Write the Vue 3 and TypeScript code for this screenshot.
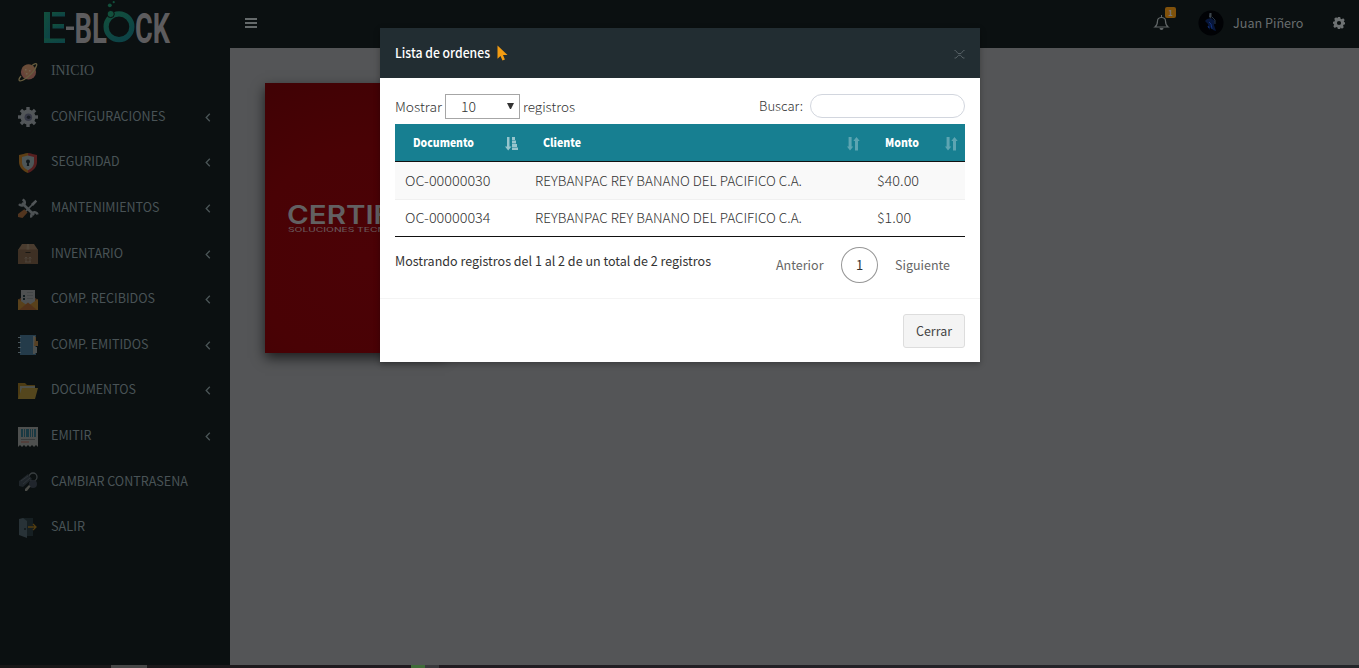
<script setup lang="ts">
interface MenuItem {
  label: string
  icon: string
  arrow: boolean
  width: number
}
interface Order {
  doc: string
  client: string
  amount: string
}

const menu: MenuItem[] = [
  { label: 'INICIO', icon: 'planet', arrow: false, width: 43 },
  { label: 'CONFIGURACIONES', icon: 'gear', arrow: true, width: 114.5 },
  { label: 'SEGURIDAD', icon: 'shield', arrow: true, width: 68.5 },
  { label: 'MANTENIMIENTOS', icon: 'tools', arrow: true, width: 108.5 },
  { label: 'INVENTARIO', icon: 'box', arrow: true, width: 72 },
  { label: 'COMP. RECIBIDOS', icon: 'mail', arrow: true, width: 104 },
  { label: 'COMP. EMITIDOS', icon: 'book', arrow: true, width: 97.5 },
  { label: 'DOCUMENTOS', icon: 'folder', arrow: true, width: 85 },
  { label: 'EMITIR', icon: 'ticket', arrow: true, width: 40.5 },
  { label: 'CAMBIAR CONTRASENA', icon: 'keys', arrow: false, width: 137 },
  { label: 'SALIR', icon: 'door', arrow: false, width: 34 },
]

const orders: Order[] = [
  { doc: 'OC-00000030', client: 'REYBANPAC REY BANANO DEL PACIFICO C.A.', amount: '$40.00' },
  { doc: 'OC-00000034', client: 'REYBANPAC REY BANANO DEL PACIFICO C.A.', amount: '$1.00' },
]
</script>

<template>
  <div class="page">
    <aside class="sidebar">
      <svg class="logo" width="230" height="48" viewBox="0 0 230 48">
        <defs>
          <linearGradient id="teal" x1="0" y1="0" x2="0.6" y2="1">
            <stop offset="0" stop-color="#12503c" />
            <stop offset="1" stop-color="#0d4346" />
          </linearGradient>
        </defs>
        <g fill="url(#teal)">
          <rect x="44" y="12" width="6" height="31" />
          <rect x="52" y="12" width="13" height="4.500" />
          <rect x="52.500" y="24" width="11.500" height="4.500" />
          <rect x="44" y="38.500" width="21" height="4.500" />
        </g>
        <g class="logo-text">
          <rect x="66" y="26.500" width="8" height="3.500" />
          <text x="74.500" y="42.500" textLength="32.500" lengthAdjust="spacingAndGlyphs">BL</text>
          <text x="135" y="42.500" textLength="35" lengthAdjust="spacingAndGlyphs">CK</text>
        </g>
        <circle cx="119" cy="26.800" r="15.900" fill="#0b1011" />
        <circle cx="119" cy="26.800" r="12.900" fill="none" stroke="url(#teal)" stroke-width="5.200" />
        <circle cx="110.700" cy="14" r="3.600" fill="#12503c" stroke="#0b1011" stroke-width="1" />
        <circle cx="109.800" cy="5.300" r="1.900" fill="#12503c" />
        <circle cx="113.700" cy="2.200" r="1.100" fill="#12503c" />
      </svg>

      <nav class="menu">
        <div v-for="item in menu" :key="item.label" class="menu-item">
          <svg class="icon" width="20" height="20" viewBox="0 0 20 20">
            <g v-if="item.icon === 'planet'">
              <circle cx="10.500" cy="10" r="7.600" fill="#e88a75" />
              <path d="M4 6a7.600 7.600 0 0 1 13 0L8 15z" fill="#f0a86c" opacity=".7" />
              <path d="M7 7h1.500v1.500H7zM11 8h1.500v1.500H11zM8 11h1.500v1.500H8z" fill="#ffd2a8" />
              <path d="M14 3.600C17 1.200 19.400.600 18.600 3.500 17.500 7 14 11.500 10 14.800 6 18 1.200 20.500 1 17.800.900 16.800 1.700 15.500 3 14" fill="none" stroke="#e6c77e" stroke-width="1.300" />
            </g>
            <g v-else-if="item.icon === 'gear'">
              <g fill="#b5b8bc">
                <circle cx="10" cy="10" r="7.500" />
                <rect v-for="n in 8" :key="n" x="8.300" y="0" width="3.400" height="5" :transform="`rotate(${n * 45} 10 10)`" />
              </g>
              <circle cx="10.300" cy="10.300" r="3.800" fill="#70708e" />
              <circle cx="10.600" cy="10.200" r="1.800" fill="#272b37" />
            </g>
            <g v-else-if="item.icon === 'shield'">
              <path d="M10 0C7 .200 4 1.500 1 2v7c0 5 4 9 9 11z" fill="#d1811b" />
              <path d="M10 0c3 .200 6 1.500 9 2v7c0 5-4 9-9 11z" fill="#bd3434" />
              <path d="M10 2.500 16 4v5c0 4-2.500 6.500-6 8.300C6.500 15.500 4 13 4 9V4z" fill="#a9b6b9" />
              <circle cx="10" cy="8.500" r="2" fill="#172428" />
              <path d="M9.200 9h1.600l.400 4H8.800z" fill="#172428" />
            </g>
            <g v-else-if="item.icon === 'tools'">
              <path d="m4 4 12 12" stroke="#a9adb2" stroke-width="2.600" />
              <path d="M1 5.200c2 2.200 5 1.500 5.600-.500C7.100 3 6 1.200 4.600.500M13.500 18.500c-1-2 .500-5 2.500-5.200 1.600-.200 3.200 1 3.500 2.200" fill="none" stroke="#a9adb2" stroke-width="2.500" />
              <path d="m7.500 12.500 8-8" stroke="#a9adb2" stroke-width="1.700" />
              <path d="m13 5 4.500-4.200 1.700 1.700L15 7z" fill="#b5b8bc" />
              <path d="m6.300 10.300 3.200 3.200L4.500 19 0 18v-3z" fill="#b56833" />
            </g>
            <g v-else-if="item.icon === 'box'">
              <path d="M4 0h12l4 6H0z" fill="#a17959" />
              <path d="M0 5.500h20V20H0z" fill="#855d3f" />
              <path d="M9 0h2l.500 5.500h-3z" fill="#b19172" />
              <path d="M7.500 8h5v1h-5z" fill="#2d2118" />
              <path d="M8 18v-4.500m-1.300 1L8 13l1.300 1.500M12 18v-4.500m-1.300 1L12 13l1.300 1.500M7 18h6" fill="none" stroke="#ae9580" stroke-width=".800" />
            </g>
            <g v-else-if="item.icon === 'mail'">
              <path d="M0 10 4 7h12l4 3v10H0z" fill="#a45d26" />
              <path d="M3 0h14v15H3z" fill="#aaa" />
              <path d="M5 5h2v2H5zm0 3h2v2H5z" fill="#182e34" />
              <path d="M9 2h6v.700H9zm0 3h6v.700H9zm0 3h6v.700H9z" fill="#8b8b8b" />
              <path d="m0 9 10 7 10-7v11H0z" fill="#c48529" />
              <path d="m1 20 9-7.500 9 7.500z" fill="#b36027" />
            </g>
            <g v-else-if="item.icon === 'book'">
              <path d="M2 0h16v20H2z" fill="#48789a" />
              <path d="M0 2h3v1H0zm0 5h3v1H0zm0 5h3v1H0zm0 5h3v1H0z" fill="#a1b7c3" />
              <path d="M15 1h2v18h-2z" fill="#a6a7a0" />
              <path d="M17 2h1v4h2v5h-4z" fill="#c0833d" />
              <path d="M17 12h2v6h-3z" fill="#a4a9aa" />
            </g>
            <g v-else-if="item.icon === 'folder'">
              <path d="M0 2h7l2 2h8v14H0z" fill="#a77616" />
              <path d="M2 5h15v8H2z" fill="#aaa998" />
              <path d="M4 7h16l-3 11H0z" fill="#b9922f" />
            </g>
            <g v-else-if="item.icon === 'ticket'">
              <path d="M0 0h20v20l-2-2-2 2-2-2-2 2-2-2-2 2-2-2-2 2-2-2-2 2z" fill="#aaa9a5" />
              <path d="M3 2h2v8H3zm3 0h1v8H6zm2 0h3v8H8zm4 0h1v8h-1zm2 0h1v8h-1zm2 0h2v8h-2z" fill="#2e7289" />
              <path d="M3 12h14v1H3z" fill="#777" />
              <path d="M3 14.500h8v1H3z" fill="#c05b48" />
            </g>
            <g v-else-if="item.icon === 'keys'">
              <circle cx="15" cy="5" r="4" fill="none" stroke="#777d80" stroke-width="1.300" />
              <path d="m1 9 9-7 4 5-9 8-4-1z" fill="#3c434d" />
              <path d="m3 9 7-5M5 12l7-6" stroke="#5e6670" stroke-width="1" />
              <circle cx="15" cy="12" r="4" fill="#3d4251" />
              <path d="m11 13 1.500 1.500L9 19H7v-2z" fill="#a19c91" />
            </g>
            <g v-else>
              <path d="M5 0h10v18H5z" fill="#26353b" />
              <path d="M1 1 5 0l4 3v17l-8-3z" fill="#51616c" />
              <circle cx="7" cy="11" r="1" fill="#192329" />
              <path d="M10 9h8m-3-3 3 3-3 3" fill="none" stroke="#b47c13" stroke-width="1.300" />
            </g>
          </svg>
          <svg class="menu-label" width="150" height="20" :class="{ serif: item.icon === 'planet' }">
            <text x="0" y="14.500" :textLength="item.width" lengthAdjust="spacingAndGlyphs">{{ item.label }}</text>
          </svg>
          <svg v-if="item.arrow" class="arrow" width="6" height="9" viewBox="0 0 6 9">
            <path d="M4.800.700 1.200 4.500l3.600 3.800" fill="none" stroke="#4b5557" stroke-width="1.300" />
          </svg>
        </div>
      </nav>
    </aside>

    <header class="topbar">
      <div class="burger"><i></i><i></i><i></i></div>
      <div class="bell">
        <svg width="15" height="16" viewBox="0 0 15 16">
          <path d="M1 12c2-1.500 2.500-3.500 2.500-6C3.500 4 5 2.700 7 2.500h1c2 .200 3.500 1.500 3.500 3.500 0 2.500.500 4.500 2.500 6z" fill="none" stroke="#626768" stroke-width="1.200" />
          <path d="M7 0h1v2.500H7zM5.500 13h4a2 2 0 0 1-4 0z" fill="#626768" />
        </svg>
        <span class="count">1</span>
      </div>
      <svg class="avatar" width="26" height="26" viewBox="0 0 26 26">
        <circle cx="13" cy="13" r="12.500" fill="#010205" />
        <path d="m9 9 4-1 4 3-1 4 2 6-3-1-2-3-2 3-1-6-3-3z" fill="#07163a" />
        <path d="m11 12 2 2 1 5M10 16l1 2" stroke="#12307c" fill="none" />
        <path d="M11.500 3h2v4l-1 1-1.500-1z" fill="#3c454d" />
        <path d="m14 7 3 3v4" stroke="#26364c" fill="none" />
      </svg>
      <svg class="user" width="74" height="20"><text x="0" y="14.500" textLength="70.500" lengthAdjust="spacingAndGlyphs">Juan Piñero</text></svg>
      <svg class="cog" width="12" height="12" viewBox="0 0 20 20" fill="#6d7172">
        <path fill-rule="evenodd" d="M8 0h4l.600 3 1.700.700L17 2l2.500 3-1.500 2.500.500 1L20 9v3l-2.500 1-.700 1.500L18 17l-3 2.500-2.500-1.800L12 20H8l-.500-2.500-2-.700L3 18.500.500 15.500 2 13l-.500-1L0 11V8l2.500-.500.700-2L2 3l3-2.500L7.500 2zM10 6.500a3.500 3.500 0 1 0 0 7 3.500 3.500 0 0 0 0-7z" />
      </svg>
    </header>

    <main class="content">
      <div class="card">
        <svg width="150" height="40" viewBox="0 0 150 40" class="brand">
          <text class="brand-name" x="-1" y="27" textLength="104" lengthAdjust="spacingAndGlyphs">CERTIF</text>
          <text class="brand-sub" x="0" y="34.500" textLength="105" lengthAdjust="spacingAndGlyphs">SOLUCIONES TECNO</text>
        </svg>
      </div>
    </main>

    <div class="taskbar"><i class="active"></i><i class="green"></i><i class="grey"></i></div>

    <section class="modal">
      <div class="modal-head">
        <svg width="98" height="20"><text class="title" x="0" y="15" textLength="95" lengthAdjust="spacingAndGlyphs">Lista de ordenes</text></svg>
        <svg class="cursor" width="11" height="16" viewBox="0 0 11 16"><path d="M.500.500v13.300l3-2.800 2 4.400 2.400-1L6 10h4.500z" fill="#f39c12" /></svg>
        <svg class="close" width="11" height="9" viewBox="0 0 11 9">
          <path d="M.500.500h1L4 3.500h3L9.500.500h1M.500 8h1.500L4.500 5.300h2L9 8h1.500" fill="none" stroke="#566065" />
        </svg>
      </div>

      <div class="modal-body">
        <div class="controls">
          <svg width="48" height="20" class="t"><text x="0" y="15" textLength="47" lengthAdjust="spacingAndGlyphs">Mostrar</text></svg>
          <div class="select">
            <svg width="18" height="20" class="t"><text x="0" y="15" textLength="15" lengthAdjust="spacingAndGlyphs">10</text></svg>
            <i class="caret"></i>
          </div>
          <svg width="53" height="20" class="t"><text x="0" y="15" textLength="52" lengthAdjust="spacingAndGlyphs">registros</text></svg>
          <svg width="45" height="20" class="t search-label"><text x="0" y="14" textLength="44" lengthAdjust="spacingAndGlyphs">Buscar:</text></svg>
          <input class="search" type="text" />
        </div>

        <div class="row head">
          <div><svg width="64" height="20"><text x="0" y="14" textLength="61" lengthAdjust="spacingAndGlyphs">Documento</text></svg>
            <svg class="sort on" width="13" height="14" viewBox="0 0 13 14"><path d="M2 0h2.500v9.500h2L3.200 13.500 0 9.500h2zM7 0h3v3H7zM7 3.500h4v3H7zM7 7h5v3H7zM7 10.500h6V13H7z" /></svg>
          </div>
          <div><svg width="42" height="20"><text x="0" y="14" textLength="38" lengthAdjust="spacingAndGlyphs">Cliente</text></svg>
            <svg class="sort" width="13" height="14" viewBox="0 0 13 14"><path d="M1.600 0h3v9.500h1.700L3 13.500 0 9.500h1.600zM9.500 0l3.200 4H11v9.500H8V4H6.300z" /></svg>
          </div>
          <div><svg width="38" height="20"><text x="0" y="14" textLength="34" lengthAdjust="spacingAndGlyphs">Monto</text></svg>
            <svg class="sort" width="13" height="14" viewBox="0 0 13 14"><path d="M1.600 0h3v9.500h1.700L3 13.500 0 9.500h1.600zM9.500 0l3.200 4H11v9.500H8V4H6.300z" /></svg>
          </div>
        </div>
        <div v-for="(o, i) in orders" :key="o.doc" class="row data" :class="{ odd: i === 0 }">
          <div><svg width="90" height="20" class="t"><text x="0" y="15" textLength="85.500" lengthAdjust="spacingAndGlyphs">{{ o.doc }}</text></svg></div>
          <div><svg width="280" height="20" class="t"><text x="0" y="15" textLength="267" lengthAdjust="spacingAndGlyphs">{{ o.client }}</text></svg></div>
          <div><svg width="50" height="20" class="t"><text x="0" y="15" :textLength="i === 0 ? 42 : 34" lengthAdjust="spacingAndGlyphs">{{ o.amount }}</text></svg></div>
        </div>

        <div class="foot">
          <svg class="info" width="320" height="20"><text x="0" y="14.500" textLength="316" lengthAdjust="spacingAndGlyphs">Mostrando registros del 1 al 2 de un total de 2 registros</text></svg>
          <svg class="prev" width="49" height="20"><text x="0" y="14.500" textLength="47.500" lengthAdjust="spacingAndGlyphs">Anterior</text></svg>
          <span class="current">1</span>
          <svg class="next" width="56" height="20"><text x="0" y="14.500" textLength="55" lengthAdjust="spacingAndGlyphs">Siguiente</text></svg>
        </div>
      </div>

      <div class="modal-foot">
        <button type="button"><svg width="37" height="20"><text x="0" y="14.500" textLength="36" lengthAdjust="spacingAndGlyphs">Cerrar</text></svg></button>
      </div>
    </section>
  </div>
</template>

<style>
body { margin: 0; overflow: hidden; }
</style>

<style scoped>
* { box-sizing: border-box; }
svg { display: block; flex: none; overflow: visible; }
.page {
  position: relative;
  display: grid;
  grid-template-columns: 230px 1fr;
  grid-template-rows: 48px 617px 3px;
  width: 1359px;
  height: 668px;
  overflow: hidden;
  background: #545557;
  font-family: "Noto Sans CJK SC", "Noto Sans", sans-serif;
  font-size: 13px;
}
.sidebar { grid-row: 1 / 3; background: #0b1011; }
.logo-text { fill: #5d5c5e; font: 700 43px Roboto, sans-serif; }
.menu-item {
  display: flex;
  align-items: center;
  height: 45.600px;
  padding: 0 19px 0 18px;
}
.menu { margin-top: 1px; }
.icon { opacity: .42; }
.menu-label { margin: -3px 0 0 13px; fill: #495356; font-size: 13px; }
.menu-label.serif { font-family: "Liberation Serif", serif; font-size: 15px; }
.arrow { margin-left: auto; }
.topbar {
  display: flex;
  align-items: center;
  padding: 0 14px 2px 15px;
  background: #0b1011;
}
.burger { display: flex; flex-direction: column; gap: 2px; width: 12px; }
.burger i { height: 2px; background: #656a6b; }
.bell { position: relative; margin-left: 897px; }
.count {
  position: absolute;
  left: 11px;
  top: -8px;
  width: 11px;
  height: 11px;
  border-radius: 2px;
  background: #80510b;
  color: #77777a;
  font-size: 8px;
  font-weight: 700;
  line-height: 11px;
  text-align: center;
}
.avatar { margin-left: 29px; }
.user { margin-left: 9px; fill: #686d6e; font-size: 13px; }
.cog { margin-left: auto; }
.content { padding: 35px; }
.card {
  width: 180px;
  height: 270px;
  padding: 120px 0 0 23px;
  background: radial-gradient(circle at 55% 65%, #4b0206, #490205 55%, #400205);
  box-shadow: 0 5px 12px rgba(0, 0, 0, .65);
}
.brand { margin-top: -6px; fill: #626062; }
.brand-name { font: 600 26px Inter, sans-serif; }
.brand-sub { font: 500 6px Inter, sans-serif; fill: #675255; }
.taskbar { grid-column: 1 / 3; display: flex; background: linear-gradient(90deg, #181717, #201b20 30%, #242429 80%, #242529); }
.taskbar .active { width: 36px; margin-left: 111px; background: #474747; }
.taskbar .green { width: 14px; margin-left: 264px; background: #3f6b38; }
.taskbar .grey { width: 14px; background: #39393c; }

.modal {
  position: absolute;
  left: 380px;
  top: 28px;
  width: 600px;
  height: 334px;
  background: #fff;
  box-shadow: 0 2px 6px rgba(0, 0, 0, .3);
}
.modal-head {
  display: flex;
  align-items: center;
  height: 50px;
  padding: 0 15px;
  background: #222d32;
}
.title { fill: #fff; font-size: 13px; font-weight: 500; }
.cursor { margin-left: 4px; }
.close { margin: 2px 0 0 auto; }
.modal-body { height: 220px; padding: 16px 15px 0; }
.controls { display: flex; height: 30px; align-items: flex-start; }
.controls > .t { margin-top: 3px; }
.t { fill: #333; font-size: 13px; font-weight: 300; }
.select {
  display: flex;
  justify-content: space-between;
  width: 75px;
  height: 25px;
  margin: 0 3px 0 2px;
  padding: 2px 5px 0 15px;
  border: 1px solid #a6a6a6;
}
.caret {
  width: 7px;
  height: 6px;
  margin-top: 6px;
  border-top: 6px solid #333;
  border-left: 3.500px solid transparent;
  border-right: 3.500px solid transparent;
}
.controls > .search-label { margin: 3px 6px 0 auto; }
.search {
  width: 155px;
  height: 24px;
  padding: 0 10px;
  border: 1px solid #d2d6de;
  border-radius: 12px;
  background: #fff;
}
.row { display: grid; grid-template-columns: 130px 342px 98px; }
.row > div { display: flex; align-items: center; }
.head { height: 38px; border-bottom: 1px solid #111; background: #177f91; fill: #fff; font-size: 11.500px; font-weight: 900; }
.head > div { padding: 0 7px 0 18px; }
.sort { margin: 3px 0 0 auto; opacity: .3; }
.sort.on { opacity: .55; }
.data { height: 37px; }
.data > div { padding-left: 10px; }
.data { border-bottom: 1px solid #111; }
.data.odd { height: 38px; padding-top: 1px; background: #f9f9f9; border-bottom-color: #f0f0f0; }
.foot { display: flex; align-items: flex-start; padding-top: 10px; fill: #333; }
.info { margin-top: 4px; }
.prev { margin: 8px 0 0 61px; fill: #666; }
.next { margin: 8px 0 0 17px; fill: #666; }
.current {
  width: 37px;
  height: 36px;
  margin-left: 16px;
  border: 1px solid #979797;
  border-radius: 50%;
  color: #333;
  line-height: 34px;
  text-align: center;
}
.modal-foot { display: flex; justify-content: flex-end; height: 64px; padding: 15px; border-top: 1px solid #f4f4f4; }
button {
  width: 62px;
  height: 34px;
  padding: 0 0 0 12px;
  border: 1px solid #ddd;
  border-radius: 3px;
  background: #f4f4f4;
  fill: #444;
  font: inherit;
}
</style>
